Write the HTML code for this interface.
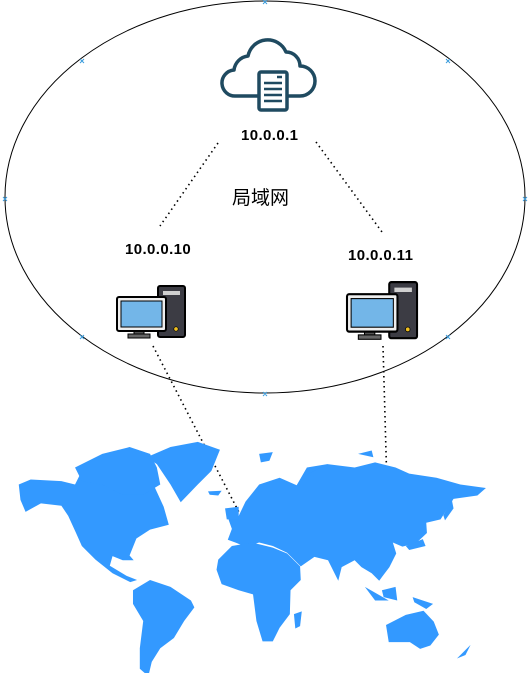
<!DOCTYPE html>
<html><head><meta charset="utf-8"><style>
body{margin:0;width:532px;height:673px;background:#fff;position:relative;overflow:hidden;font-family:"Liberation Sans",sans-serif}
.t{position:absolute;font-weight:bold;font-size:15px;letter-spacing:0.4px;color:#000;white-space:nowrap}
svg{position:absolute;left:0;top:0}
</style></head><body>
<svg width="532" height="673" viewBox="0 0 532 673">
<ellipse cx="265" cy="197" rx="260" ry="196" fill="none" stroke="#000" stroke-width="1"/>
<g stroke="#3a9bdc" stroke-width="1">
<path d="M263 0l4 4M267 0l-4 4M263 392l4 4M267 392l-4 4M3 197l4 4M7 197l-4 4M523 197l4 4M527 197l-4 4M80 59l4 4M84 59l-4 4M446 59l4 4M450 59l-4 4M80 335l4 4M84 335l-4 4M446 335l4 4M450 335l-4 4"/>
</g>
<g stroke="#000" stroke-width="1.6" stroke-dasharray="1.5 3.5" fill="none">
<path d="M218 143L160 226"/><path d="M316 142L382 232"/>
<path d="M153 346L243 520"/><path d="M383 346L388 522"/>
</g>
<g fill="none" stroke="#1f4a60" stroke-width="3.5" stroke-linejoin="round">
<path d="M258 96H236a13 13 0 0 1-2-26a16 16 0 0 1 14-14a20 20 0 0 1 38-4a14 14 0 0 1 14 14a14 14 0 0 1 0 30H287"/>
<rect x="259" y="72" width="28" height="38" rx="2"/>
</g>
<g stroke="#1f4a60" stroke-width="2.5">
<path d="M264 83h18M264 89h18M264 95h18M264 101h18"/><path d="M277 77h5"/>
</g>
<defs>
<g id="pc">
<rect x="41" y="1" width="27" height="51" rx="2" fill="#3c3c44" stroke="#000" stroke-width="2"/>
<rect x="46" y="6" width="17" height="4" fill="#d0d0d0"/>
<circle cx="59" cy="44" r="2.2" fill="#f0c020" stroke="#000" stroke-width=".7"/>
<rect x="17" y="45" width="10" height="5" fill="#555" stroke="#000"/>
<rect x="11" y="49" width="22" height="4" fill="#666" stroke="#000"/>
<rect x="0" y="12" width="49" height="34" rx="2" fill="#eee" stroke="#000" stroke-width="2"/>
<rect x="4" y="16" width="41" height="26" fill="#73b6e8" stroke="#000"/>
</g>
</defs>
<use href="#pc" transform="translate(117,285)"/>
<use href="#pc" transform="translate(347,281) scale(1.03 1.1)"/>
<g transform="translate(0,430) scale(0.341)" fill="#3399ff">
<path d="M55 160L90 145L180 150L220 160L240 120L300 95L380 88L420 118L450 160L480 225L495 278L440 292L400 318L380 368L392 382L360 382L330 370L322 398L372 428L402 440L382 446L330 420L280 380L240 340L222 300L200 252L180 222L120 215L75 240L60 205Z"/>
<path d="M220 110L300 70L380 50L440 70L460 110L470 160L420 190L360 190L300 160L240 150Z"/>
<path d="M430 80L500 50L580 35L645 58L620 120L580 160L530 212L500 160L460 100Z"/>
<path d="M390 470L440 440L500 460L560 500L570 520L540 560L510 610L470 640L445 680L435 722L410 700L410 640L420 560L390 510Z"/>
<path d="M670 262L700 252L720 210L760 160L820 140L870 162L900 110L960 100L1040 110L1100 95L1160 110L1200 128L1280 140L1350 160L1425 170L1400 192L1330 202L1292 262L1250 272L1252 302L1220 332L1180 342L1152 330L1162 362L1142 402L1112 442L1090 420L1060 402L1040 382L1002 402L992 442L962 382L922 372L882 400L842 360L800 340L760 330L720 342L690 330L668 322L680 290Z"/>
<path d="M640 380L680 340L740 330L800 345L842 362L880 400L882 440L852 470L850 540L820 580L800 620L770 620L752 560L742 482L700 470L650 452L635 410Z"/>
<path d="M1132 572L1190 542L1242 530L1272 562L1287 600L1262 632L1232 642L1202 622L1140 622Z"/>
<path d="M862 540L885 532L880 575L866 582Z"/>
<path d="M1300 250L1325 205L1330 230L1305 265Z"/>
<path d="M1190 340L1240 320L1248 340L1200 352Z"/>
<path d="M1340 670L1370 640L1380 630L1365 660Z"/>
<path d="M1070 460L1140 500L1100 500Z"/>
<path d="M1120 470L1160 460L1165 500L1125 490Z"/>
<path d="M1210 490L1270 510L1250 525L1215 505Z"/>
<path d="M760 70L800 65L790 90L765 95Z"/>
<path d="M1050 70L1090 60L1095 80Z"/>
<path d="M610 180L650 178L640 192L615 190Z"/>
<path d="M660 230L700 225L700 262L665 262Z"/>
<path d="M900 130L960 100L930 140Z"/>
</g>
</svg>
<div class="t" style="left:241px;top:127px">10.0.0.1</div>
<div style="position:absolute;left:232px;top:183px;font-size:19px;font-family:'Liberation Sans','Noto Sans CJK SC',sans-serif">局域网</div>
<div class="t" style="left:125px;top:241px">10.0.0.10</div>
<div class="t" style="left:348px;top:247px">10.0.0.11</div>
</body></html>
